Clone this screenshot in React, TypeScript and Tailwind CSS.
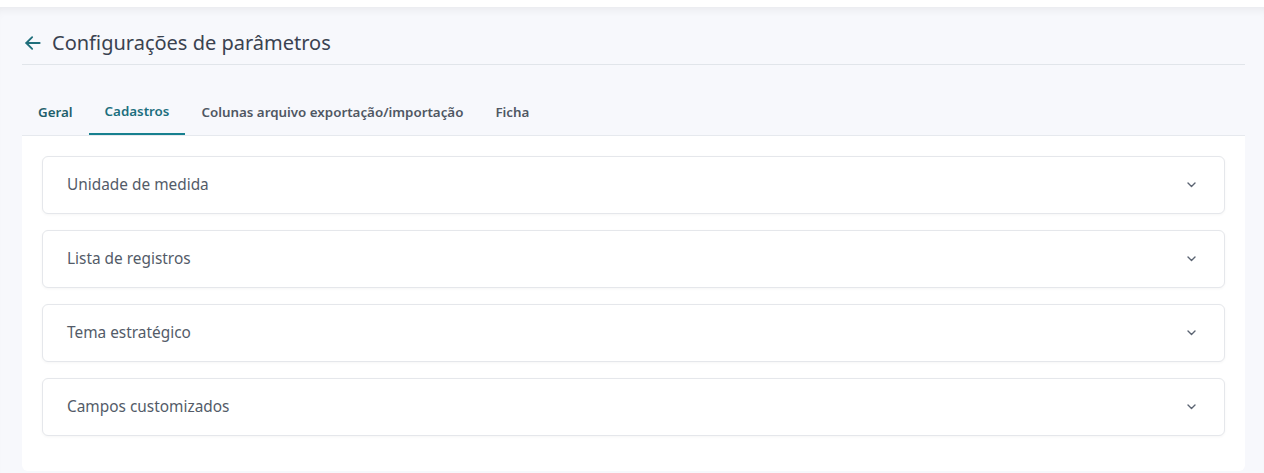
import React from "react";

const items = ["Unidade de medida", "Lista de registros", "Tema estratégico", "Campos customizados"];
const tabs = ["Geral", "Cadastros", "Colunas arquivo exportação/importação", "Ficha"];

export default function App() {
  return (
    <div className="w-[1264px] h-[473px] bg-white overflow-hidden" style={{ fontFamily: "'Noto Sans', Lato, sans-serif" }}>
      <div className="h-[7px] bg-white" />
      <div className="h-[466px] bg-[#f7f8fc] shadow-[inset_0_8px_10px_-6px_rgba(0,0,0,0.07)] px-[22px] pr-[19px]">
        <div className="flex items-center h-[58px] border-b border-[#e1e5ea] pt-[14px]">
          <svg width="20" height="20" viewBox="0 0 24 24" fill="none" stroke="#1f6e7b" strokeWidth="2.2" strokeLinecap="round" strokeLinejoin="round" className="ml-[1px]">
            <path d="M20 12H4" />
            <path d="M11 19l-7-7 7-7" />
          </svg>
          <h1 className="ml-[9px] text-[20px] text-[#3a4250] leading-none">Configurações de parâmetros</h1>
        </div>
        <div className="flex mt-[28px] border-b border-[#e6e9ee] h-[43px]">
          {tabs.map((t, i) => (
            <div
              key={t}
              className={
                "px-4 text-[13.35px] font-semibold flex items-center pb-[4px] " +
                (i === 1
                  ? "text-[#1c6f7e] border-b-2 border-[#17808f]"
                  : i === 0
                  ? "text-[#1f5f6b]"
                  : "text-[#4f5763]")
              }
            >
              {t}
            </div>
          ))}
        </div>
        <div className="bg-white rounded-b-md px-5 pt-5 pb-[35px] flex flex-col gap-4">
          {items.map((it) => (
            <div
              key={it}
              className="h-[58px] border border-[#e5e7eb] rounded-md bg-white shadow-[0_1px_3px_rgba(0,0,0,0.04)] flex items-center justify-between pl-6 pr-[28px]"
            >
              <span className="text-[15.4px] text-[#535b68]">{it}</span>
              <svg width="9" height="6" viewBox="0 0 9 6" fill="none" stroke="#5b6472" strokeWidth="1.4" strokeLinecap="round" strokeLinejoin="round">
                <path d="M1 1l3.5 3.5L8 1" />
              </svg>
            </div>
          ))}
        </div>
      </div>
    </div>
  );
}
